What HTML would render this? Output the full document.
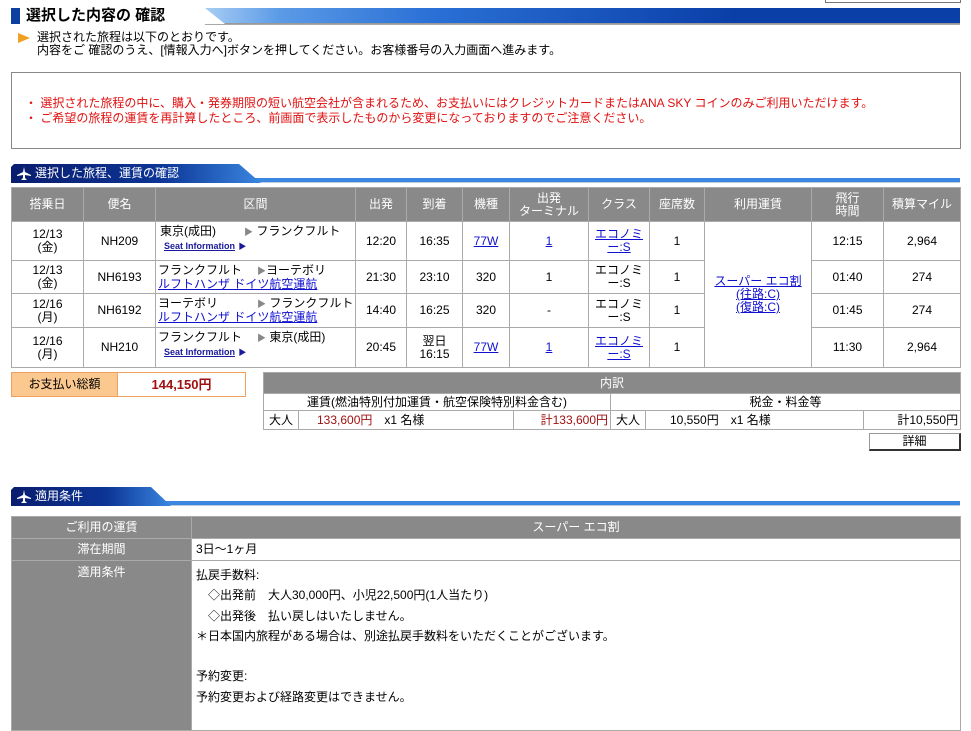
<!DOCTYPE html>
<html><head><meta charset="utf-8"><style>
*{margin:0;padding:0;box-sizing:border-box}
body{width:971px;height:720px;overflow:hidden;background:#fff;font-family:"Liberation Sans","Noto Sans CJK JP",sans-serif;font-size:12px;color:#000;position:relative}
.a{position:absolute}
a{color:#1010d0;text-decoration:underline}
table{border-collapse:collapse;position:absolute;table-layout:fixed}
td,th{border:1px solid #aaa;text-align:center;font-weight:normal;line-height:13px}
th{background:#898989;color:#fff}
.bar{position:absolute;left:11px;width:949px;height:20px}
.bar .tab{position:absolute;left:0;top:0;height:19px;width:250px;background:linear-gradient(90deg,#0a1d6e,#0c3596 60%,#3a86e0);clip-path:polygon(0 3px,3px 0,228px 0,250px 19px,0 19px);color:#fff;font-size:12px;line-height:19px;padding-left:24px}
.bar .line{position:absolute;left:0;right:0;top:14px;height:5px;background:#3a86e0;border-bottom:1px solid #bcd}
.plane{position:absolute;left:6px;top:3px}
</style></head><body>
<div class="a" style="left:825px;top:-2px;width:136px;height:5px;border:1px solid #777;border-top:none"></div>
<div class="a" style="left:11px;top:8px;width:9px;height:16px;background:#0b3fa0"></div>
<div class="a" style="left:26px;top:7px;font-size:15px;font-weight:bold;line-height:18px">選択した内容の 確認</div>
<div class="a" style="left:205px;top:8px;width:755px;height:16px;background:linear-gradient(90deg,#a8cdf4,#5a9ae6 10%,#2a70d6 30%,#0a3fa8 70%);clip-path:polygon(0 0,100% 0,100% 100%,20px 100%);border-bottom:1px solid #999"></div>
<div class="a" style="left:205px;top:24px;width:755px;height:1px;background:#aaa"></div>
<div class="a" style="left:18px;top:33px;width:0;height:0;border-left:12px solid #f0a020;border-top:5px solid transparent;border-bottom:5px solid transparent"></div>
<div class="a" style="left:37px;top:31px;line-height:13px">選択された旅程は以下のとおりです。<br>内容をご 確認のうえ、[情報入力へ]ボタンを押してください。お客様番号の入力画面へ進みます。</div>
<div class="a" style="left:11px;top:72px;width:950px;height:77px;border:1px solid #888"></div>
<div class="a" style="left:25px;top:96px;color:#e01010;line-height:15px">・ 選択された旅程の中に、購入・発券期限の短い航空会社が含まれるため、お支払いにはクレジットカードまたはANA SKY コインのみご利用いただけます。<br>・ ご希望の旅程の運賃を再計算したところ、前画面で表示したものから変更になっておりますのでご注意ください。</div>

<div class="bar" style="top:164px"><div class="line"></div><div class="tab"><svg class="plane" width="14" height="13" viewBox="0 0 14 13"><path d="M7 0 L8 5 L14 8 L14 9 L8 8 L8 11 L10 13 L4 13 L6 11 L6 8 L0 9 L0 8 L6 5 Z" fill="#fff"/></svg>選択した旅程、運賃の確認</div></div>

<table style="left:11px;top:187px;width:949px">
<colgroup><col style="width:72px"><col style="width:72px"><col style="width:200px"><col style="width:51px"><col style="width:56px"><col style="width:47px"><col style="width:79px"><col style="width:61px"><col style="width:55px"><col style="width:107px"><col style="width:72px"><col style="width:77px"></colgroup>
<tr style="height:34px"><th>搭乗日</th><th>便名</th><th>区間</th><th>出発</th><th>到着</th><th>機種</th><th>出発<br>ターミナル</th><th>クラス</th><th>座席数</th><th>利用運賃</th><th>飛行<br>時間</th><th>積算マイル</th></tr>
<tr style="height:39px"><td>12/13<br>(金)</td><td>NH209</td><td style="text-align:left;padding-left:4px;vertical-align:top;padding-top:3px">東京(成田)<span style="display:inline-block;width:28px"></span><span style="color:#888;font-size:9px">▶</span> フランクフルト<br><a style="font-size:9px;font-weight:bold;color:#1a1a9a;margin-left:4px">Seat Information</a> <span style="color:#1a1a9a;font-size:8px">▶</span></td><td>12:20</td><td>16:35</td><td><a>77W</a></td><td><a>1</a></td><td><a>エコノミ<br>ー:S</a></td><td>1</td><td rowspan="4"><a>スーパー エコ割<br>(往路:C)<br>(復路:C)</a></td><td>12:15</td><td>2,964</td></tr>
<tr style="height:33px"><td>12/13<br>(金)</td><td>NH6193</td><td style="text-align:left;padding-left:2px">フランクフルト<span style="display:inline-block;width:15px"></span><span style="color:#888;font-size:9px">▶</span>ヨーテボリ<br><a>ルフトハンザ ドイツ航空運航</a></td><td>21:30</td><td>23:10</td><td>320</td><td>1</td><td>エコノミ<br>ー:S</td><td>1</td><td>01:40</td><td>274</td></tr>
<tr style="height:34px"><td>12/16<br>(月)</td><td>NH6192</td><td style="text-align:left;padding-left:2px">ヨーテボリ<span style="display:inline-block;width:39px"></span><span style="color:#888;font-size:9px">▶</span> フランクフルト<br><a>ルフトハンザ ドイツ航空運航</a></td><td>14:40</td><td>16:25</td><td>320</td><td>-</td><td>エコノミ<br>ー:S</td><td>1</td><td>01:45</td><td>274</td></tr>
<tr style="height:40px"><td>12/16<br>(月)</td><td>NH210</td><td style="text-align:left;padding-left:2px;vertical-align:top;padding-top:3px">フランクフルト<span style="display:inline-block;width:15px"></span><span style="color:#888;font-size:9px">▶</span> 東京(成田)<br><a style="font-size:9px;font-weight:bold;color:#1a1a9a;margin-left:6px">Seat Information</a> <span style="color:#1a1a9a;font-size:8px">▶</span></td><td>20:45</td><td>翌日<br>16:15</td><td><a>77W</a></td><td><a>1</a></td><td><a>エコノミ<br>ー:S</a></td><td>1</td><td>11:30</td><td>2,964</td></tr>
</table>

<div class="a" style="left:11px;top:372px;width:235px;height:25px;border:1px solid #f0a060;background:#fff"></div>
<div class="a" style="left:12px;top:373px;width:106px;height:23px;background:#fbc990;border-right:1px solid #f0a060;text-align:center;line-height:23px">お支払い総額</div>
<div class="a" style="left:118px;top:373px;width:127px;line-height:23px;text-align:center;color:#a01010;font-weight:bold;font-size:13px">144,150円</div>

<table style="left:263px;top:372px;width:697px">
<colgroup><col style="width:35px"><col style="width:215px"><col style="width:97px"><col style="width:35px"><col style="width:218px"><col style="width:97px"></colgroup>
<tr style="height:21px"><th colspan="6">内訳</th></tr>
<tr style="height:17px"><td colspan="3">運賃(燃油特別付加運賃・航空保険特別料金含む)</td><td colspan="3">税金・料金等</td></tr>
<tr style="height:19px"><td>大人</td><td style="text-align:left;padding-left:18px"><span style="color:#a01010">133,600円</span>　x1 名様</td><td style="text-align:right;color:#a01010;padding-right:2px">計133,600円</td><td>大人</td><td style="text-align:left;padding-left:24px">10,550円　x1 名様</td><td style="text-align:right;padding-right:2px">計10,550円</td></tr>
</table>
<div class="a" style="left:869px;top:433px;width:92px;height:18px;border:1px solid #999;border-right:2px solid #333;border-bottom:2px solid #333;text-align:center;line-height:15px;background:#fff">詳細</div>

<div class="bar" style="top:487px"><div class="line"></div><div class="tab" style="width:160px;clip-path:polygon(0 3px,3px 0,140px 0,160px 19px,0 19px)"><svg class="plane" width="14" height="13" viewBox="0 0 14 13"><path d="M7 0 L8 5 L14 8 L14 9 L8 8 L8 11 L10 13 L4 13 L6 11 L6 8 L0 9 L0 8 L6 5 Z" fill="#fff"/></svg>適用条件</div></div>

<table style="left:11px;top:516px;width:949px">
<colgroup><col style="width:180px"><col style="width:769px"></colgroup>
<tr style="height:22px"><th>ご利用の運賃</th><th>スーパー エコ割</th></tr>
<tr style="height:22px"><th>滞在期間</th><td style="text-align:left;padding-left:4px">3日〜1ヶ月</td></tr>
<tr style="height:170px"><th style="vertical-align:top;padding-top:5px">適用条件</th><td style="text-align:left;padding-left:4px;vertical-align:top;padding-top:4px;line-height:20.3px">払戻手数料:<br>　◇出発前　大人30,000円、小児22,500円(1人当たり)<br>　◇出発後　払い戻しはいたしません。<br>＊日本国内旅程がある場合は、別途払戻手数料をいただくことがございます。<br><br>予約変更:<br>予約変更および経路変更はできません。</td></tr>
</table>
</body></html>
